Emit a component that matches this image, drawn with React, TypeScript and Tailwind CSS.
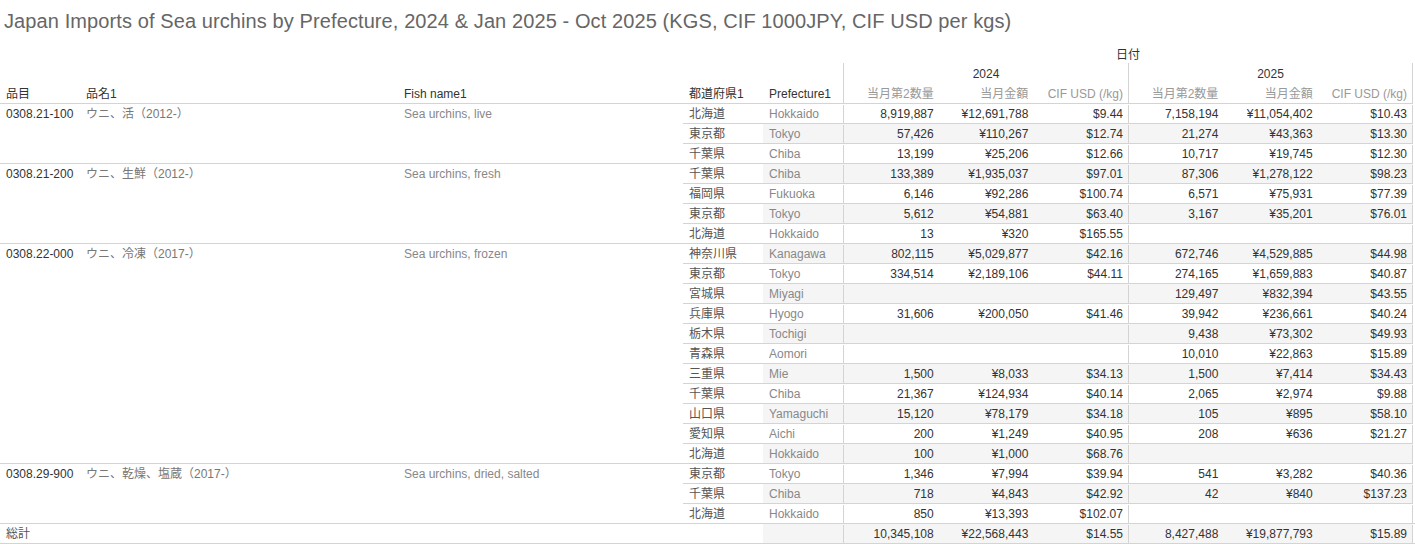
import React from 'react'

type Vals = [string, string, string] | null
type Row = { jp: string; en: string; y24: Vals; y25: Vals }
type Group = { code: string; name: string; fish: string; rows: Row[] }

const groups: Group[] = [
    {
        code: '0308.21-100',
        name: 'ウニ、活（2012-）',
        fish: 'Sea urchins, live',
        rows: [
            { jp: '北海道', en: 'Hokkaido', y24: ['8,919,887', '¥12,691,788', '$9.44'], y25: ['7,158,194', '¥11,054,402', '$10.43'] },
            { jp: '東京都', en: 'Tokyo', y24: ['57,426', '¥110,267', '$12.74'], y25: ['21,274', '¥43,363', '$13.30'] },
            { jp: '千葉県', en: 'Chiba', y24: ['13,199', '¥25,206', '$12.66'], y25: ['10,717', '¥19,745', '$12.30'] },
        ],
    },
    {
        code: '0308.21-200',
        name: 'ウニ、生鮮（2012-）',
        fish: 'Sea urchins, fresh',
        rows: [
            { jp: '千葉県', en: 'Chiba', y24: ['133,389', '¥1,935,037', '$97.01'], y25: ['87,306', '¥1,278,122', '$98.23'] },
            { jp: '福岡県', en: 'Fukuoka', y24: ['6,146', '¥92,286', '$100.74'], y25: ['6,571', '¥75,931', '$77.39'] },
            { jp: '東京都', en: 'Tokyo', y24: ['5,612', '¥54,881', '$63.40'], y25: ['3,167', '¥35,201', '$76.01'] },
            { jp: '北海道', en: 'Hokkaido', y24: ['13', '¥320', '$165.55'], y25: null },
        ],
    },
    {
        code: '0308.22-000',
        name: 'ウニ、冷凍（2017-）',
        fish: 'Sea urchins, frozen',
        rows: [
            { jp: '神奈川県', en: 'Kanagawa', y24: ['802,115', '¥5,029,877', '$42.16'], y25: ['672,746', '¥4,529,885', '$44.98'] },
            { jp: '東京都', en: 'Tokyo', y24: ['334,514', '¥2,189,106', '$44.11'], y25: ['274,165', '¥1,659,883', '$40.87'] },
            { jp: '宮城県', en: 'Miyagi', y24: null, y25: ['129,497', '¥832,394', '$43.55'] },
            { jp: '兵庫県', en: 'Hyogo', y24: ['31,606', '¥200,050', '$41.46'], y25: ['39,942', '¥236,661', '$40.24'] },
            { jp: '栃木県', en: 'Tochigi', y24: null, y25: ['9,438', '¥73,302', '$49.93'] },
            { jp: '青森県', en: 'Aomori', y24: null, y25: ['10,010', '¥22,863', '$15.89'] },
            { jp: '三重県', en: 'Mie', y24: ['1,500', '¥8,033', '$34.13'], y25: ['1,500', '¥7,414', '$34.43'] },
            { jp: '千葉県', en: 'Chiba', y24: ['21,367', '¥124,934', '$40.14'], y25: ['2,065', '¥2,974', '$9.88'] },
            { jp: '山口県', en: 'Yamaguchi', y24: ['15,120', '¥78,179', '$34.18'], y25: ['105', '¥895', '$58.10'] },
            { jp: '愛知県', en: 'Aichi', y24: ['200', '¥1,249', '$40.95'], y25: ['208', '¥636', '$21.27'] },
            { jp: '北海道', en: 'Hokkaido', y24: ['100', '¥1,000', '$68.76'], y25: null },
        ],
    },
    {
        code: '0308.29-900',
        name: 'ウニ、乾燥、塩蔵（2017-）',
        fish: 'Sea urchins, dried, salted',
        rows: [
            { jp: '東京都', en: 'Tokyo', y24: ['1,346', '¥7,994', '$39.94'], y25: ['541', '¥3,282', '$40.36'] },
            { jp: '千葉県', en: 'Chiba', y24: ['718', '¥4,843', '$42.92'], y25: ['42', '¥840', '$137.23'] },
            { jp: '北海道', en: 'Hokkaido', y24: ['850', '¥13,393', '$102.07'], y25: null },
        ],
    },
]

const font = { fontFamily: '"Liberation Sans", "Noto Sans CJK JP", sans-serif' }

const Nums = ({ vals, last }: { vals: Vals; last?: boolean }) => (
    <div className={`grid w-[285px] grid-cols-3 border-l border-[#d4d4d4] ${last ? 'border-r' : ''}`}>
        {(vals ?? ['', '', '']).map((v, i) => (
            <div key={i} className="pr-[5px] text-right text-[#333]">
                {v}
            </div>
        ))}
    </div>
)

const App = () => {
    let idx = 0
    return (
        <div className="w-[1415px] h-[544px] overflow-hidden bg-white text-[12px] leading-[19px]" style={font}>
            <div className="flex h-[43px] items-center pl-[4px] pb-[1px] text-[20px] tracking-[0.1px] text-[#666]">
                Japan Imports of Sea urchins by Prefecture, 2024 &amp; Jan 2025 - Oct 2025 (KGS, CIF 1000JPY, CIF USD per kgs)
            </div>

            <div className="flex h-[20px] items-center pt-[4px]">
                <div className="w-[843px]" />
                <div className="w-[570px] text-center text-[#333]">日付</div>
            </div>
            <div className="flex h-[20px]">
                <div className="w-[843px]" />
                <div className="flex w-[285px] items-center justify-center border-l border-[#d4d4d4] pt-[3px] text-[#333]">2024</div>
                <div className="flex w-[285px] items-center justify-center border-l border-r border-[#d4d4d4] pt-[3px] text-[#333]">2025</div>
            </div>
            <div className="flex h-[20px]">
                <div className="w-[80px] pl-[6px] pt-[2px] text-[#333]">品目</div>
                <div className="w-[318px] pl-[6px] pt-[2px] text-[#333]">品名1</div>
                <div className="w-[285px] pl-[6px] pt-[2px] text-[#333]">Fish name1</div>
                <div className="w-[80px] pl-[6px] pt-[2px] text-[#333]">都道府県1</div>
                <div className="w-[80px] pl-[6px] pt-[2px] text-[#333]">Prefecture1</div>
                {[0, 1].map(s => (
                    <div key={s} className={`grid w-[285px] grid-cols-3 border-l border-[#d4d4d4] pt-[2px] text-[#999] ${s === 1 ? 'border-r' : ''}`}>
                        <div className="pr-[5px] text-right">当月第2数量</div>
                        <div className="pr-[5px] text-right">当月金額</div>
                        <div className="pr-[5px] text-right">CIF USD (/kg)</div>
                    </div>
                ))}
            </div>

            {groups.map(g => (
                <div key={g.code} className="flex">
                    <div className="flex w-[683px] border-t border-[#d4d4d4] pt-[1px]">
                        <div className="w-[80px] pl-[6px] text-[#333]">{g.code}</div>
                        <div className="w-[318px] pl-[6px] text-[#777]">{g.name}</div>
                        <div className="w-[285px] pl-[6px] text-[#888]">{g.fish}</div>
                    </div>
                    <div className="flex flex-col">
                        {g.rows.map(r => {
                            const band = idx++ % 2 === 1
                            return (
                                <div key={r.jp + r.en} className="flex h-[20px] border-t border-[#d4d4d4]">
                                    <div className="w-[80px] pl-[6px] pt-[1px] text-[#555]">{r.jp}</div>
                                    <div className={`flex pt-[1px] ${band ? 'bg-[#f5f5f5]' : ''}`}>
                                        <div className="w-[80px] pl-[6px] text-[#888]">{r.en}</div>
                                        <Nums vals={r.y24} />
                                        <Nums vals={r.y25} last />
                                    </div>
                                </div>
                            )
                        })}
                    </div>
                </div>
            ))}

            <div className="flex h-[21px] border-y border-[#d4d4d4]">
                <div className="w-[763px] pl-[6px] pt-[1px] text-[#555]">総計</div>
                <div className="flex bg-[#f5f5f5] pt-[1px]">
                    <div className="w-[80px]" />
                    <Nums vals={['10,345,108', '¥22,568,443', '$14.55']} />
                    <Nums vals={['8,427,488', '¥19,877,793', '$15.89']} last />
                </div>
            </div>
        </div>
    )
}

export default App
